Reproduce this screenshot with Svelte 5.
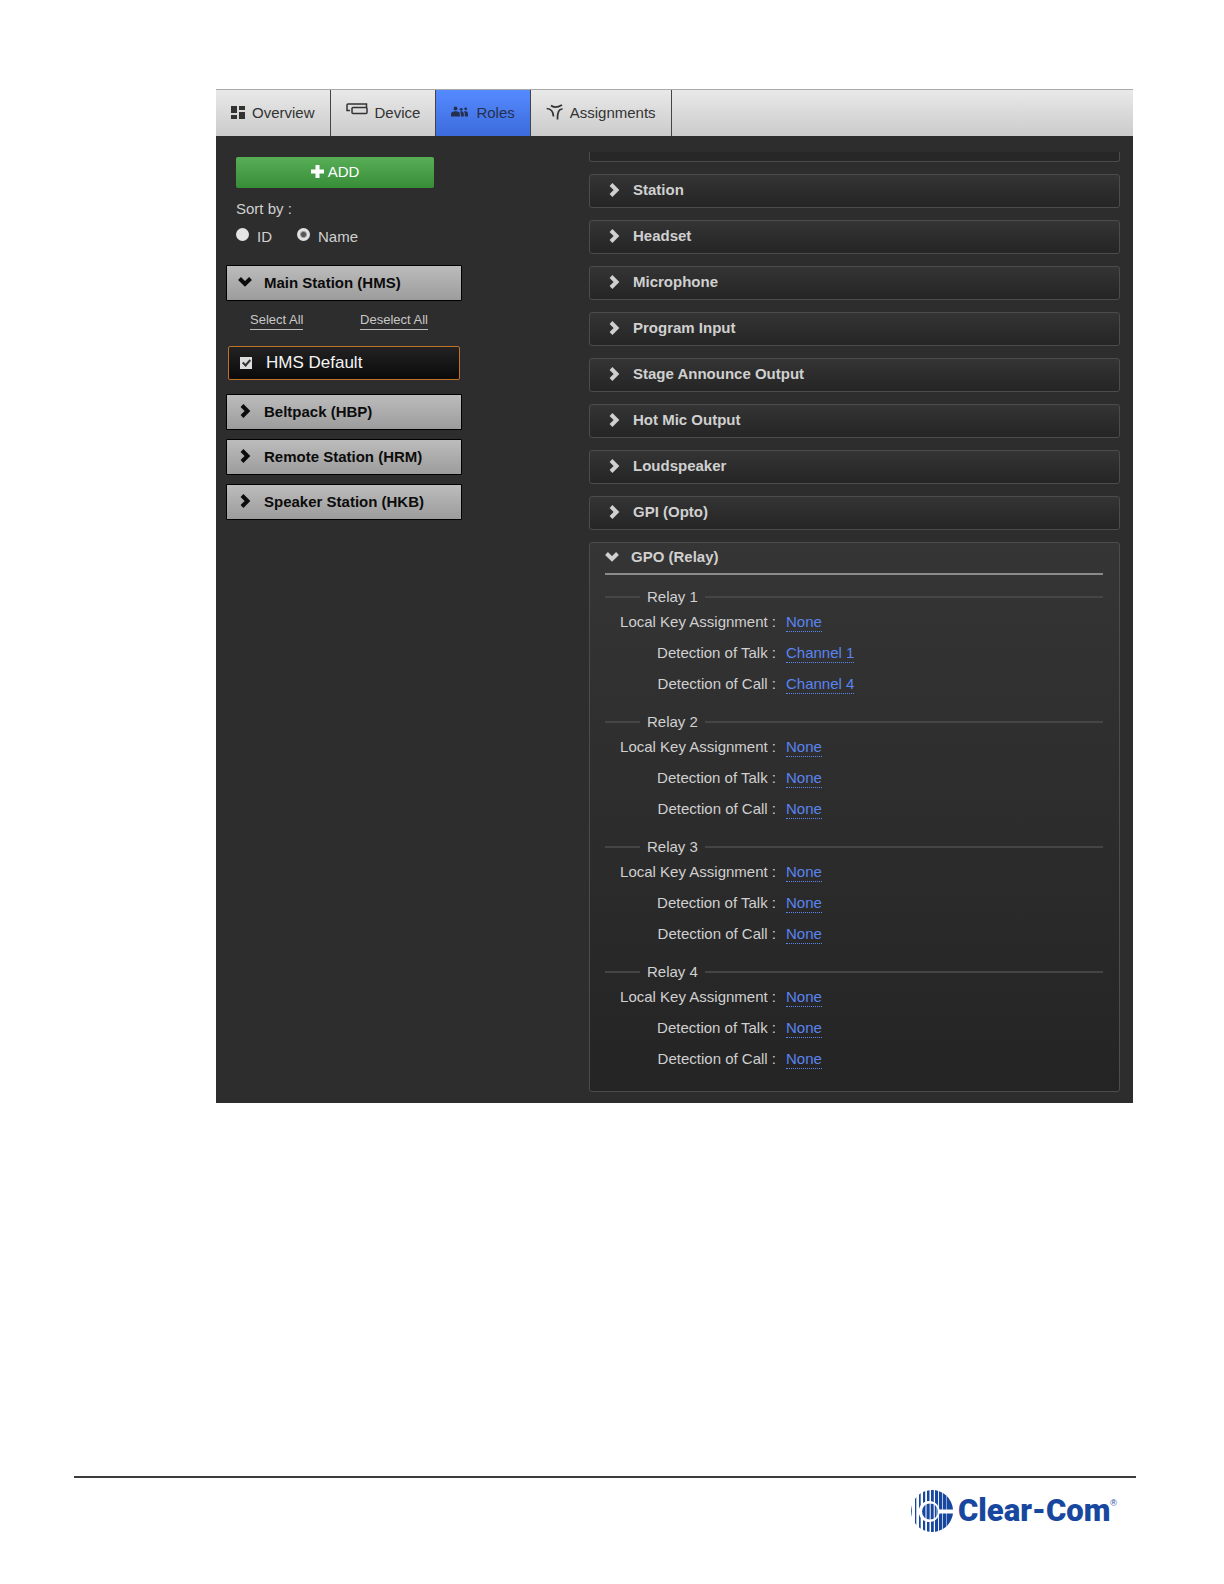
<script lang="ts">
  let activeTab = $state('Roles');
  let sortBy = $state('Name');
  let hmsChecked = $state(true);

  let stations = $state([
    { name: 'Main Station (HMS)', open: true },
    { name: 'Beltpack (HBP)', open: false },
    { name: 'Remote Station (HRM)', open: false },
    { name: 'Speaker Station (HKB)', open: false }
  ]);

  const tabs = ['Overview', 'Device', 'Roles', 'Assignments'];

  const sections = [
    'Station',
    'Headset',
    'Microphone',
    'Program Input',
    'Stage Announce Output',
    'Hot Mic Output',
    'Loudspeaker',
    'GPI (Opto)'
  ];

  const relays = [
    { name: 'Relay 1', key: 'None', talk: 'Channel 1', call: 'Channel 4' },
    { name: 'Relay 2', key: 'None', talk: 'None', call: 'None' },
    { name: 'Relay 3', key: 'None', talk: 'None', call: 'None' },
    { name: 'Relay 4', key: 'None', talk: 'None', call: 'None' }
  ];

  let gpoOpen = $state(true);
</script>

{#snippet chevron(open: boolean)}
  <svg class="chevron" width="14" height="14" viewBox="0 0 14 14" fill="none" stroke="currentColor" stroke-width="4">
    {#if open}
      <path d="M1.500 3.500 7 9l5.500-5.500" />
    {:else}
      <path d="M4 1.500 9.500 7 4 12.500" />
    {/if}
  </svg>
{/snippet}

{#snippet setting(label: string, value: string)}
  <div class="setting">
    <span class="setting-label">{label} :</span>
    <a href="#edit">{value}</a>
  </div>
{/snippet}

<div class="page">
  <div class="app">
    <nav class="tabs">
      {#each tabs as tab}
        <button class="tab" class:active={activeTab === tab} onclick={() => (activeTab = tab)}>
          {#if tab === 'Overview'}
            <svg width="14" height="14" viewBox="0 0 14 14" fill="currentColor">
              <path d="M0 1h6v7H0zM8 1h6v4H8zM0 10h6v4H0zM8 7h6v7H8z" />
            </svg>
          {:else if tab === 'Device'}
            <svg class="raised" width="22" height="12" viewBox="0 0 22 12" fill="none" stroke="currentColor" stroke-width="1.500">
              <path d="M4 7.500H1V2q0-1 1-1h18.500v3" />
              <rect x="6" y="4.500" width="15" height="6" rx="1" />
            </svg>
          {:else if tab === 'Roles'}
            <svg width="18" height="12" viewBox="0 0 18 12" fill="currentColor">
              <circle cx="4.500" cy="2.500" r="1.900" />
              <circle cx="10.200" cy="3.300" r="1.400" />
              <circle cx="14.700" cy="2.800" r="1.400" />
              <path d="M0 10.500V8q0-2.800 4.500-2.800T8.800 8v2.500zM9.800 10.500V7.500L9 5.500q3.500-.8 3.800 2v3zM13.800 10.500V7.500L13 5.300q4-.8 4 2.200v3z" />
            </svg>
          {:else}
            <svg width="17" height="16" viewBox="0 0 17 16" fill="none" stroke="currentColor" stroke-width="1.700">
              <path d="M.7 4.500Q7.200 5 7.500 12.500M5 1.500Q9 5 16 .9M16.600 5Q11.200 4.500 11.500 15.500" />
            </svg>
          {/if}
          {tab}
        </button>
      {/each}
    </nav>

    <div class="content">
      <aside>
        <button class="add">
          <svg width="13" height="13" viewBox="0 0 13 13" fill="currentColor">
            <path d="M4.500 0h4v4.500H13v4H8.500V13h-4V8.500H0v-4h4.500z" />
          </svg>
          ADD
        </button>

        <div class="sort">
          <div>Sort by :</div>
          <div class="sort-options">
            <label><input type="radio" name="sort" value="ID" bind:group={sortBy} />ID</label>
            <label><input type="radio" name="sort" value="Name" bind:group={sortBy} />Name</label>
          </div>
        </div>

        {#each stations as station, i}
          <button class="station" onclick={() => (station.open = !station.open)}>
            {@render chevron(station.open)}
            {station.name}
          </button>
          {#if i === 0 && station.open}
            <div class="select-links">
              <a href="#select" onclick={() => (hmsChecked = true)}>Select All</a>
              <a href="#deselect" onclick={() => (hmsChecked = false)}>Deselect All</a>
            </div>
            <label class="role">
              <input type="checkbox" bind:checked={hmsChecked} />
              HMS Default
            </label>
          {/if}
        {/each}
      </aside>

      <main>
        <div class="panel panel-cut"></div>
        {#each sections as section}
          <div class="panel">
            <button class="panel-header">{@render chevron(false)}{section}</button>
          </div>
        {/each}
        <div class="panel panel-open">
          <button class="panel-header" onclick={() => (gpoOpen = !gpoOpen)}>
            {@render chevron(gpoOpen)}GPO (Relay)
          </button>
          {#if gpoOpen}
            {#each relays as relay}
              <fieldset>
                <legend>{relay.name}</legend>
                {@render setting('Local Key Assignment', relay.key)}
                {@render setting('Detection of Talk', relay.talk)}
                {@render setting('Detection of Call', relay.call)}
              </fieldset>
            {/each}
          {/if}
        </div>
      </main>
    </div>
  </div>

  <footer>
    <div class="logo">
      <svg width="42" height="42" viewBox="0 0 42 42">
        <defs>
          <clipPath id="ring">
            <path d="M21 0a21 21 0 0 1 21 19.500H28.500a10.500 10.500 0 1 0 0 4H42A21 21 0 1 1 21 0z" />
          </clipPath>
          <clipPath id="core"><circle cx="19" cy="21.500" r="8" /></clipPath>
        </defs>
        <g clip-path="url(#ring)" fill="currentColor">
          <path d="M0 0h1v42H0zM4 0h1.300v42H4zM8 0h1.700v42H8zM12 0h2.200v42h-2.200zM16 0h2.500v42H16zM20 0h2.800v42H20zM24 0h3.100v42h-3.100zM28 0h3.300v42H28zM32 0h3.500v42H32zM36 0h6v42h-6z" />
        </g>
        <g clip-path="url(#core)" fill="currentColor">
          <path d="M10 0h4.500v42H10zM15.500 0h3.200v42h-3.200zM19.700 0h3v42h-3zM23.800 0h1.800v42h-1.800zM26.300 0h1v42h-1z" />
        </g>
      </svg>
      <span class="brand">Clear-Com</span>
      <span class="mark">®</span>
    </div>
  </footer>
</div>

<style>
  :global(body) {
    margin: 0;
    background: #fff;
  }

  .page {
    display: flex;
    flex-direction: column;
    min-height: 100vh;
    box-sizing: border-box;
    padding: 89px 88px 0 74px;
    font-family: "Liberation Sans", Arial, sans-serif;
    font-size: 15px;
  }

  button {
    font: inherit;
    color: inherit;
    cursor: pointer;
  }

  .app {
    margin: 0 3px 0 142px;
    background: #2d2d2d;
    color: #d0d0d0;
  }

  .tabs {
    display: flex;
    height: 47px;
    box-sizing: border-box;
    border-top: 1px solid #aaa;
    background: linear-gradient(#e9e9e9, #cbcbcb);
  }

  .tab {
    display: flex;
    align-items: center;
    gap: 7px;
    padding: 0 15px 2px;
    border: none;
    border-right: 1px solid #444;
    background: none;
    color: #333;
  }

  .tab.active {
    background: linear-gradient(#558aff, #3c6bdc);
    color: #25304d;
  }

  .raised {
    margin-bottom: 6px;
  }

  .content {
    display: flex;
    justify-content: space-between;
    padding: 0 13px 11px 10px;
  }

  aside {
    width: 236px;
    padding-top: 21px;
  }

  .add {
    display: flex;
    align-items: center;
    justify-content: center;
    gap: 4px;
    width: 198px;
    height: 31px;
    margin-left: 10px;
    padding: 0 0 2px;
    border: none;
    border-radius: 2px;
    background: linear-gradient(#57ae57, #388e38);
    color: #fff;
  }

  .sort {
    margin: 12px 0 19px 10px;
    line-height: 18px;
  }

  .sort-options {
    display: flex;
    gap: 25px;
    margin-top: 10px;
  }

  .sort-options label {
    display: flex;
    gap: 8px;
  }

  input {
    appearance: none;
    margin: 0;
    flex: none;
  }

  input[type='radio'] {
    width: 13px;
    height: 13px;
    border-radius: 50%;
    background: #e4e4e4;
  }

  input[type='radio']:checked {
    background: radial-gradient(circle, #555 2px, #e0e0e0 4px);
  }

  .station {
    display: flex;
    align-items: center;
    gap: 12px;
    width: 100%;
    height: 36px;
    margin-bottom: 9px;
    padding: 0 11px 2px;
    border: 1px solid #000;
    border-radius: 1px;
    background: linear-gradient(#bcbcbc, #9c9c9c);
    color: #0c0c0c;
    font-weight: bold;
  }

  .select-links {
    display: flex;
    justify-content: space-between;
    padding: 0 34px 0 24px;
    font-size: 13px;
    line-height: 19px;
  }

  .select-links a {
    border-bottom: 1px solid #bbb;
    color: #c8c8c8;
    text-decoration: none;
  }

  .role {
    display: flex;
    align-items: center;
    gap: 14px;
    height: 32px;
    margin: 16px 2px 14px;
    padding-left: 11px;
    border: 1px solid #c07328;
    border-radius: 2px;
    background: linear-gradient(#222, #0a0a0a);
    color: #f4f4f4;
    font-size: 17px;
  }

  input[type='checkbox'] {
    width: 12px;
    height: 12px;
    background: #ddd;
  }

  input[type='checkbox']:checked::before {
    content: '';
    display: block;
    width: 3px;
    height: 6px;
    margin: 1px 0 0 4px;
    border: solid #333;
    border-width: 0 2px 2px 0;
    transform: rotate(42deg);
  }

  main {
    width: 531px;
    padding-top: 16px;
  }

  @media (min-width: 1300px) {
    main {
      width: 60%;
    }
  }

  .panel {
    margin-bottom: 12px;
    border: 1px solid #4c4c4c;
    border-radius: 3px;
    background: linear-gradient(#343434, #252525);
  }

  .panel-cut {
    height: 9px;
    border-top: none;
    border-radius: 0 0 3px 3px;
    background: #272727;
  }

  .panel-header {
    display: flex;
    align-items: center;
    gap: 12px;
    width: 100%;
    height: 32px;
    padding: 0 0 3px 17px;
    border: none;
    background: none;
    font-weight: bold;
    text-align: left;
  }

  .panel-open {
    margin-bottom: 0;
    padding: 0 16px 16px 15px;
    background: linear-gradient(#353535, #242424);
  }

  .panel-open .panel-header {
    padding-left: 0;
    border-bottom: 2px solid #8a8a8a;
  }

  fieldset {
    margin: 12px 0 0;
    padding: 0;
    border: none;
    border-top: 2px solid #454545;
  }

  legend {
    margin-left: 35px;
    padding: 0 7px;
    line-height: 20px;
  }

  .setting {
    display: flex;
    align-items: baseline;
    gap: 10px;
    height: 31px;
    box-sizing: border-box;
    padding-top: 6px;
    line-height: 18px;
  }

  .setting-label {
    width: 171px;
    text-align: right;
  }

  .setting a {
    border-bottom: 1px dotted #5c86ee;
    color: #5a84f0;
    text-decoration: none;
  }

  footer {
    height: 106px;
    margin-top: auto;
    border-top: 2px solid #3c3c3e;
  }

  .logo {
    display: flex;
    justify-content: flex-end;
    margin: 12px 19px 0 0;
    color: #17479e;
  }

  .brand {
    margin-left: 5px;
    font-family: Roboto, "Liberation Sans", sans-serif;
    font-size: 31px;
    font-weight: 900;
    line-height: 42px;
  }

  .mark {
    margin-top: 8px;
    font-size: 9px;
  }
</style>
